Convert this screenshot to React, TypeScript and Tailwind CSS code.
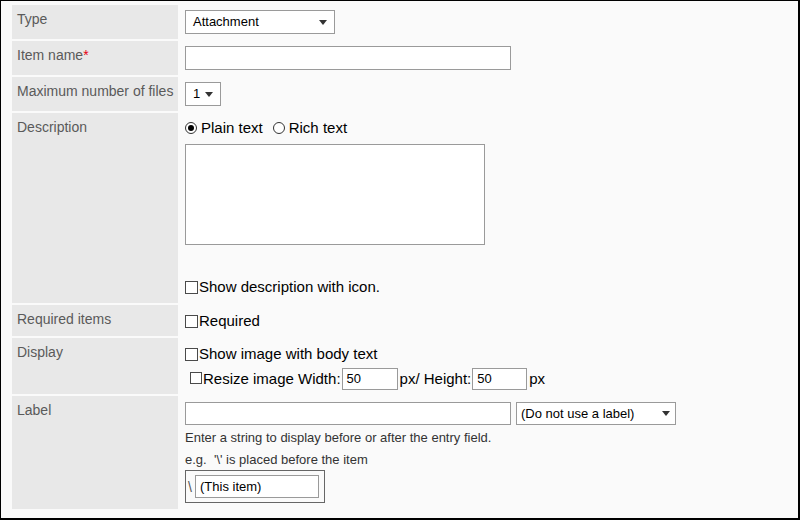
import type { ReactNode } from "react";

function Row({ label, required, h, pt = "pt-[5px]", children }: { label: string; required?: boolean; h: string; pt?: string; children: ReactNode }) {
  return (
    <div className={`flex ${h}`}>
      <div className="w-[166px] shrink-0 bg-[#e8e8e8] pl-[5px] pt-[6px] text-[14px] leading-4 text-[#5a5a5a]">
        {label}
        {required ? <span className="text-[#e60012]">*</span> : null}
      </div>
      <div className={`flex-1 pl-[7px] ${pt} text-[15px] leading-[18px] text-black`}>{children}</div>
    </div>
  );
}

function Select({ value, w, h = "h-[24px]", pl = "pl-[7px]", pr = "pr-[7px]" }: { value: string; w: string; h?: string; pl?: string; pr?: string }) {
  return (
    <div className={`flex ${w} ${h} items-center justify-between border border-[#9a9a9a] bg-white ${pl} ${pr} text-[13px] text-black`}>
      <span>{value}</span>
      <svg width="8" height="5" viewBox="0 0 8 5" className="shrink-0">
        <path d="M0 0h8L4 5z" fill="#333" />
      </svg>
    </div>
  );
}

function Checkbox({ small }: { small?: boolean }) {
  return <span className={`inline-block shrink-0 border border-[#4a4a4a] bg-white ${small ? "size-[12px]" : "size-[13px]"}`} />;
}

function Radio({ checked }: { checked?: boolean }) {
  return (
    <span className="flex size-[12px] shrink-0 items-center justify-center rounded-full border border-[#333] bg-white">
      {checked ? <span className="size-[6px] rounded-full bg-black" /> : null}
    </span>
  );
}

function TextBox({ w, h, value, pl = "pl-[4px]" }: { w: string; h: string; value?: string; pl?: string }) {
  return (
    <div className={`${w} ${h} flex shrink-0 items-center border border-[#9a9a9a] bg-white ${pl} text-[13px] text-black`}>
      {value}
    </div>
  );
}

export default function App() {
  return (
    <div className="h-[520px] w-[800px] border-t border-l border-r-2 border-b-2 border-black bg-[#fafafa] pl-[11px] pt-[4px] font-['Liberation_Sans',Arial,sans-serif]">
      <div className="flex w-[776px] flex-col gap-[2px]">
        <Row label="Type" h="h-[34px]">
          <Select value="Attachment" w="w-[150px]" />
        </Row>
        <Row label="Item name" required h="h-[34px]">
          <TextBox w="w-[326px]" h="h-[24px]" />
        </Row>
        <Row label="Maximum number of files" h="h-[34px]">
          <Select value="1" w="w-[36px]" />
        </Row>
        <Row label="Description" h="h-[190px]" pt="pt-[6px]">
          <div className="flex items-center">
            <Radio checked />
            <span className="ml-[4px]">Plain text</span>
            <span className="ml-[10px]">
              <Radio />
            </span>
            <span className="ml-[4px]">Rich text</span>
          </div>
          <textarea
            readOnly
            className="mt-[7px] block h-[101px] w-[300px] resize-none border border-[#9a9a9a] bg-white outline-none"
          />
          <label className="mt-[33px] flex items-center gap-[1px]">
            <Checkbox />
            <span>Show description with icon.</span>
          </label>
        </Row>
        <Row label="Required items" h="h-[31px]" pt="pt-[7px]">
          <label className="flex items-center gap-[1px]">
            <Checkbox />
            <span>Required</span>
          </label>
        </Row>
        <Row label="Display" h="h-[56px]" pt="pt-[7px]">
          <label className="flex items-center gap-[1px]">
            <Checkbox />
            <span>Show image with body text</span>
          </label>
          <div className="mt-[5px] flex h-[22px] items-center">
            <span className="ml-[5px]">
              <Checkbox small />
            </span>
            <span className="ml-[1px]">Resize image Width:</span>
            <span className="ml-[1px]">
              <TextBox w="w-[56px]" h="h-[22px]" value="50" />
            </span>
            <span className="ml-[2px]">px/ Height:</span>
            <span className="ml-[1px]">
              <TextBox w="w-[55px]" h="h-[22px]" value="50" />
            </span>
            <span className="ml-[2px]">px</span>
          </div>
        </Row>
        <Row label="Label" h="h-[113px]" pt="pt-[6px]">
          <div className="flex gap-[5px]">
            <TextBox w="w-[326px]" h="h-[23px]" />
            <Select value="(Do not use a label)" w="w-[160px]" h="h-[23px]" pl="pl-[4px]" pr="pr-[5px]" />
          </div>
          <p className="mt-[5px] text-[13px] leading-4 text-[#333]">Enter a string to display before or after the entry field.</p>
          <p className="mt-[6px] text-[13px] leading-4 text-[#333]">e.g.&nbsp; '\' is placed before the item</p>
          <div className="mt-[2px] flex h-[33px] w-[140px] items-center border border-[#666]">
            <span className="w-[9px] shrink-0 pl-[2px] text-[14px] leading-4 text-[#555]">\</span>
            <TextBox w="w-[124px]" h="h-[23px]" value="(This item)" pl="pl-[4px]" />
          </div>
        </Row>
      </div>
    </div>
  );
}
